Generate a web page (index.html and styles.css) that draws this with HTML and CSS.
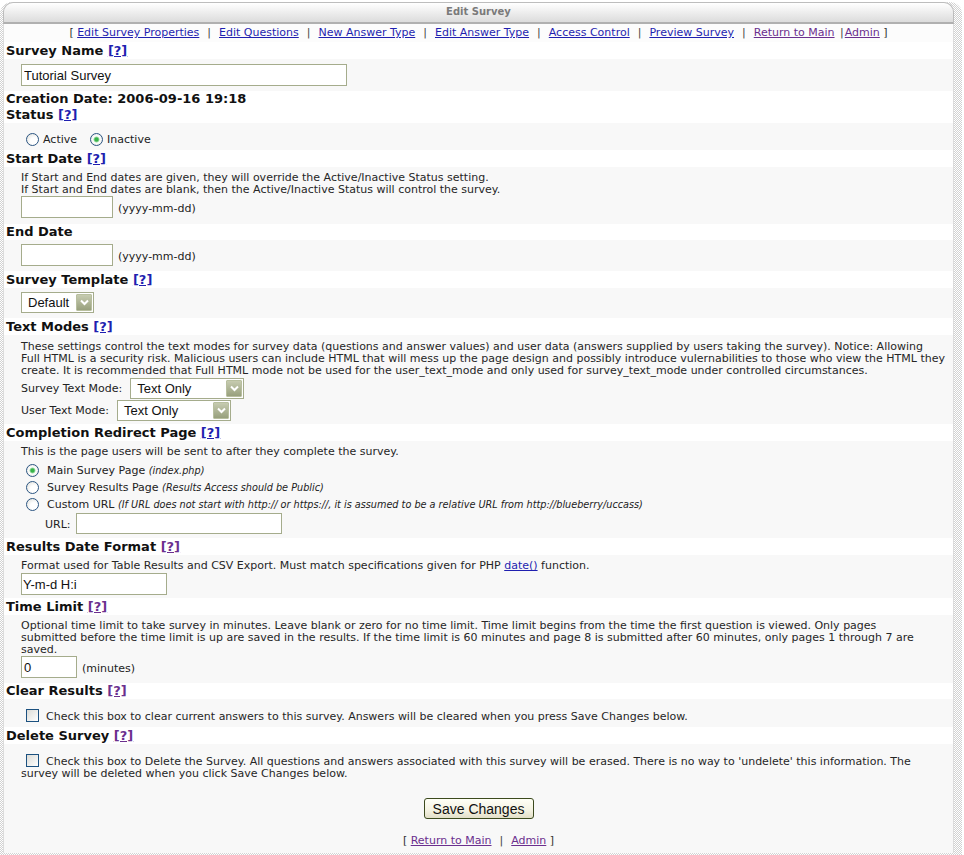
FILE: index.html
```html
<!DOCTYPE html>
<html>
<head>
<meta charset="utf-8">
<title>Edit Survey</title>
<link rel="stylesheet" href="styles.css">
</head>
<body>
<div class="frame">
  <div class="panel">
    <div class="titlebar">Edit Survey</div>
    <div class="nav">[ <a href="#">Edit Survey Properties</a><span class="sep">|</span><a href="#">Edit Questions</a><span class="sep">|</span><a href="#">New Answer Type</a><span class="sep">|</span><a href="#">Edit Answer Type</a><span class="sep">|</span><a href="#">Access Control</a><span class="sep">|</span><a href="#">Preview Survey</a><span class="sep">|</span><a href="#" class="visited">Return to Main</a> <span class="sep2">|</span><a href="#" class="visited">Admin</a> ]</div>

    <div class="hdr">Survey Name <a href="#" class="help">[?]</a></div>
    <div class="row r-name"><input class="text w-name" type="text" value="Tutorial Survey"></div>

    <div class="hdr h16">Creation Date: 2006-09-16 19:18</div>
    <div class="hdr h16">Status <a href="#" class="help">[?]</a></div>
    <div class="row r-status">
      <label class="opt"><input type="radio" name="status" class="radio"><span>Active</span></label>
      <label class="opt"><input type="radio" name="status" class="radio" checked><span>Inactive</span></label>
    </div>

    <div class="hdr">Start Date <a href="#" class="help">[?]</a></div>
    <div class="row r-desc">
      <div class="desc">If Start and End dates are given, they will override the Active/Inactive Status setting.<br>If Start and End dates are blank, then the Active/Inactive Status will control the survey.</div>
      <div class="field"><input class="text w-date" type="text"><span class="hint">(yyyy-mm-dd)</span></div>
    </div>

    <div class="hdr h16">End Date</div>
    <div class="row r-end">
      <div class="field"><input class="text w-date" type="text"><span class="hint">(yyyy-mm-dd)</span></div>
    </div>

    <div class="hdr">Survey Template <a href="#" class="help">[?]</a></div>
    <div class="row r-tpl">
      <span class="select w-tpl"><span class="sel-text">Default</span><span class="arrow"><svg width="11" height="11" viewBox="0 0 11 11"><path d="M2 3.5 L5.5 7 L9 3.5" fill="none" stroke="#fff" stroke-width="2"/></svg></span></span>
    </div>

    <div class="hdr">Text Modes <a href="#" class="help">[?]</a></div>
    <div class="row r-modes">
      <div class="desc">These settings control the text modes for survey data (questions and answer values) and user data (answers supplied by users taking the survey). Notice: Allowing<br>Full HTML is a security risk. Malicious users can include HTML that will mess up the page design and possibly introduce vulernabilities to those who view the HTML they create. It is recommended that Full HTML mode not be used for the user_text_mode and only used for survey_text_mode under controlled circumstances.</div>
      <div class="mode"><span class="lbl">Survey Text Mode:</span><span class="select w-mode"><span class="sel-text">Text Only</span><span class="arrow"><svg width="11" height="11" viewBox="0 0 11 11"><path d="M2 3.5 L5.5 7 L9 3.5" fill="none" stroke="#fff" stroke-width="2"/></svg></span></span></div>
      <div class="mode"><span class="lbl">User Text Mode:</span><span class="select w-mode"><span class="sel-text">Text Only</span><span class="arrow"><svg width="11" height="11" viewBox="0 0 11 11"><path d="M2 3.5 L5.5 7 L9 3.5" fill="none" stroke="#fff" stroke-width="2"/></svg></span></span></div>
    </div>

    <div class="hdr">Completion Redirect Page <a href="#" class="help">[?]</a></div>
    <div class="row r-redirect">
      <div class="desc">This is the page users will be sent to after they complete the survey.</div>
      <label class="choice first"><input type="radio" name="redir" class="radio" checked><span>Main Survey Page <em>(index.php)</em></span></label>
      <label class="choice"><input type="radio" name="redir" class="radio"><span>Survey Results Page <em>(Results Access should be Public)</em></span></label>
      <label class="choice"><input type="radio" name="redir" class="radio"><span>Custom URL <em>(If URL does not start with http:// or https://, it is assumed to be a relative URL from http://blueberry/uccass)</em></span></label>
      <div class="url"><span class="lbl">URL:</span><input class="text w-url" type="text"></div>
    </div>

    <div class="hdr">Results Date Format <a href="#" class="help visited">[?]</a></div>
    <div class="row r-fmt">
      <div class="desc">Format used for Table Results and CSV Export. Must match specifications given for PHP <a href="#">date()</a> function.</div>
      <input class="text w-fmt" type="text" value="Y-m-d H:i">
    </div>

    <div class="hdr">Time Limit <a href="#" class="help visited">[?]</a></div>
    <div class="row r-time">
      <div class="desc">Optional time limit to take survey in minutes. Leave blank or zero for no time limit. Time limit begins from the time the first question is viewed. Only pages submitted before the time limit is up are saved in the results. If the time limit is 60 minutes and page 8 is submitted after 60 minutes, only pages 1 through 7 are saved.</div>
      <div class="field"><input class="text w-min" type="text" value="0"><span class="hint">(minutes)</span></div>
    </div>

    <div class="hdr h16">Clear Results <a href="#" class="help visited">[?]</a></div>
    <div class="row r-check">
      <div class="desc"><input type="checkbox" class="check">Check this box to clear current answers to this survey. Answers will be cleared when you press Save Changes below.</div>
    </div>

    <div class="hdr">Delete Survey <a href="#" class="help visited">[?]</a></div>
    <div class="row r-last">
      <div class="desc"><input type="checkbox" class="check">Check this box to Delete the Survey. All questions and answers associated with this survey will be erased. There is no way to 'undelete' this information. The survey will be deleted when you click Save Changes below.</div>
      <div class="actions"><button type="button" class="btn">Save Changes</button></div>
      <div class="foot">[ <a href="#" class="visited">Return to Main</a><span class="sep">|</span><a href="#" class="visited">Admin</a> ]</div>
    </div>
  </div>
</div>
</body>
</html>
```

FILE: styles.css
```css
* { box-sizing: border-box; }

body {
  margin: 0;
  background: #fff;
  font-family: "DejaVu Sans", Verdana, sans-serif;
  font-size: 11px;
  color: #222;
}

a { color: #1f1fb0; }
a.visited { color: #6b2f8e; }

.frame {
  width: 962px;
  padding: 0 6px 4px 3px;
  border-radius: 12px 12px 0 0;
  background-color: #fff;
  background-image: repeating-conic-gradient(#d2d2d2 0 25%, #fff 0 50%);
  background-size: 2px 2px;
}

.panel {
  width: 951px;
  min-height: 851px;
  background: #f8f8f8;
  border-left: 1px solid #dcdcdc;
  border-right: 1px solid #dcdcdc;
  border-radius: 10px 10px 0 0;
}

.titlebar {
  height: 22px;
  margin: 2px -1px 0;
  border: 1px solid #bdbdbd;
  border-bottom: 2px solid #b0b0b0;
  border-radius: 10px 10px 0 0;
  background: linear-gradient(#ffffff, #dcdcdc);
  text-align: center;
  font-weight: bold;
  font-size: 10px;
  line-height: 17px;
  color: #7a7a7a;
}

.nav {
  height: 18px;
  line-height: 17px;
  text-align: center;
  background: #fcfcfc;
  color: #333;
}

.sep { margin: 0 8px; color: #444; }
.sep2 { margin: 0 1px 0 2px; color: #444; }

.hdr {
  background: #fff;
  padding-left: 2px;
  font-size: 13px;
  font-weight: bold;
  color: #111;
  height: 17px;
  line-height: 17px;
}
.hdr.h16 { height: 16px; line-height: 16px; }

.help { font-weight: bold; }

.row {
  background: #f8f8f8;
  padding-left: 17px;
  padding-right: 13px;
}

.desc {
  line-height: 12px;
  color: #262626;
}

input.text {
  height: 22px;
  border: 1px solid #a5ac8c;
  background: #fff;
  font-family: "Liberation Sans", Arial, sans-serif;
  font-size: 13px;
  color: #111;
  padding: 0 2px;
  margin: 0;
  display: block;
}

.w-name { width: 326px; }
.w-date { width: 92px; }
.w-url { width: 206px; height: 21px !important; }
.w-fmt { width: 146px; padding-left: 1px !important; }
.w-min { width: 56px; padding-left: 2px !important; }

.r-name { padding-top: 5px; height: 32px; }
.r-status { display: flex; gap: 13px; padding-left: 22px; padding-top: 10px; height: 27px; }

.opt { display: flex; align-items: center; gap: 4px; height: 13px; }

.radio {
  appearance: none;
  -webkit-appearance: none;
  width: 13px;
  height: 13px;
  margin: 0;
  border: 1px solid #2b5582;
  border-radius: 50%;
  background: radial-gradient(circle at 65% 65%, #ffffff 0 35%, #dcdcd6 100%);
  display: inline-block;
  flex: none;
}
.radio:checked {
  background: radial-gradient(circle, #37b34a 0 1.6px, #9fdca6 2.6px, #fff 3.4px, #ffffff 40%, #dcdcd6 100%);
}

.field { display: flex; align-items: center; gap: 5px; }
.hint { padding-top: 2px; color: #222; }

.r-desc { padding-top: 5px; height: 57px; }
.r-end { padding-top: 4px; height: 31px; }
.r-tpl { padding-top: 4px; height: 30px; }

.select {
  display: flex;
  align-items: center;
  height: 21px;
  border: 1px solid #a5ac8c;
  background: #fff;
  font-family: "Liberation Sans", Arial, sans-serif;
  font-size: 13px;
  color: #111;
  padding: 0 1px 0 6px;
}
.sel-text { flex: 1; white-space: nowrap; }
.arrow {
  width: 16px;
  height: 17px;
  display: flex;
  align-items: center;
  justify-content: center;
  border: 1px solid #b8bf9f;
  border-radius: 1px;
  background: linear-gradient(#c6cbb0, #98a07d);
}
.w-tpl { width: 73px; }
.w-mode { width: 114px; }

.r-modes { padding-top: 6px; padding-right: 4px; height: 89px; }
.mode { display: flex; align-items: center; gap: 8px; height: 22px; }

.r-redirect { padding-top: 5px; height: 97px; }
.choice { display: flex; align-items: center; gap: 8px; padding-left: 5px; height: 17px; }
.choice.first { margin-top: 4px; }
.choice em { font-size: 9.7px; }
.url { display: flex; align-items: center; gap: 5px; padding-left: 24px; }
.url .lbl { padding-top: 2px; }

.r-fmt { padding-top: 5px; height: 43px; }
.r-fmt .w-fmt { margin-top: 1px; }

.r-time { padding-top: 5px; padding-right: 22px; height: 68px; }

.check {
  appearance: none;
  -webkit-appearance: none;
  width: 13px;
  height: 13px;
  margin: 0 7px 0 5px;
  border: 1px solid #1c5180;
  background: linear-gradient(135deg, #dcdcd7, #ffffff);
  vertical-align: -2px;
}

.r-check { padding-top: 10px; height: 28px; }
.r-last { padding-top: 10px; }

.actions { text-align: center; padding-top: 18px; margin-left: -17px; margin-right: -13px; }
.btn {
  height: 21px;
  width: 110px;
  font-family: "Liberation Sans", Arial, sans-serif;
  font-size: 14px;
  color: #111;
  border: 1px solid #3c4a1e;
  border-radius: 3px;
  background: linear-gradient(#fffff6, #f4f2e2 60%, #e2dfc8);
  padding: 0;
}

.foot {
  text-align: center;
  margin-left: -17px;
  margin-right: -13px;
  padding-top: 16px;
  line-height: 12px;
  color: #333;
}
```
